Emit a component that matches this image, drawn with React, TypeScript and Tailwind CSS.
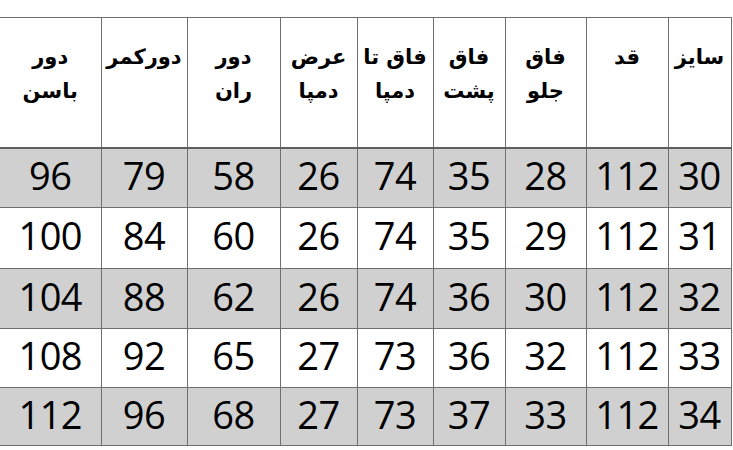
const headers: string[][] = [
  ['سایز'],
  ['قد'],
  ['فاق', 'جلو'],
  ['فاق', 'پشت'],
  ['فاق تا', 'دمپا'],
  ['عرض', 'دمپا'],
  ['دور', 'ران'],
  ['دورکمر'],
  ['دور', 'باسن'],
]

const rows: number[][] = [
  [30, 112, 28, 35, 74, 26, 58, 79, 96],
  [31, 112, 29, 35, 74, 26, 60, 84, 100],
  [32, 112, 30, 36, 74, 26, 62, 88, 104],
  [33, 112, 32, 36, 73, 27, 65, 92, 108],
  [34, 112, 33, 37, 73, 27, 68, 96, 112],
]

// right to left, as the table reads
const widths = [63, 82, 81, 72, 76, 77, 93, 86, 101]
const heights = ['h-[60px]', 'h-[61px]', 'h-[60px]', 'h-[59px]', 'h-[58px]']

export default function App() {
  return (
    <div className="w-[733px] h-[450px] bg-white overflow-hidden pt-[17px]">
      <table dir="rtl" className="table-fixed border-collapse w-[731px]">
        <colgroup>
          {widths.map((w, i) => (
            <col key={i} style={{ width: w }} />
          ))}
        </colgroup>
        <thead>
          <tr className="h-[130px]">
            {headers.map((lines, i) => (
              <th
                key={i}
                className="align-top pt-[22px] border border-[#6f6f6f] border-b-2 border-b-[#5f5f5f] last:border-l-0 font-bold text-[21px] leading-[34px] text-black text-center [font-family:'DejaVu_Sans',sans-serif]"
              >
                {lines.map((l, j) => (
                  <div key={j}>{l}</div>
                ))}
              </th>
            ))}
          </tr>
        </thead>
        <tbody>
          {rows.map((row, r) => (
            <tr key={r} className={`${heights[r]} ${r % 2 === 0 ? 'bg-[#d0d0d0]' : 'bg-white'}`}>
              {row.map((v, c) => (
                <td
                  key={c}
                  className="border border-[#6f6f6f] last:border-l-0 text-center align-middle pb-[6px] text-[38px] leading-none text-black tracking-[-0.5px] [font-family:'Open_Sans',sans-serif]"
                >
                  {v}
                </td>
              ))}
            </tr>
          ))}
        </tbody>
      </table>
    </div>
  )
}
